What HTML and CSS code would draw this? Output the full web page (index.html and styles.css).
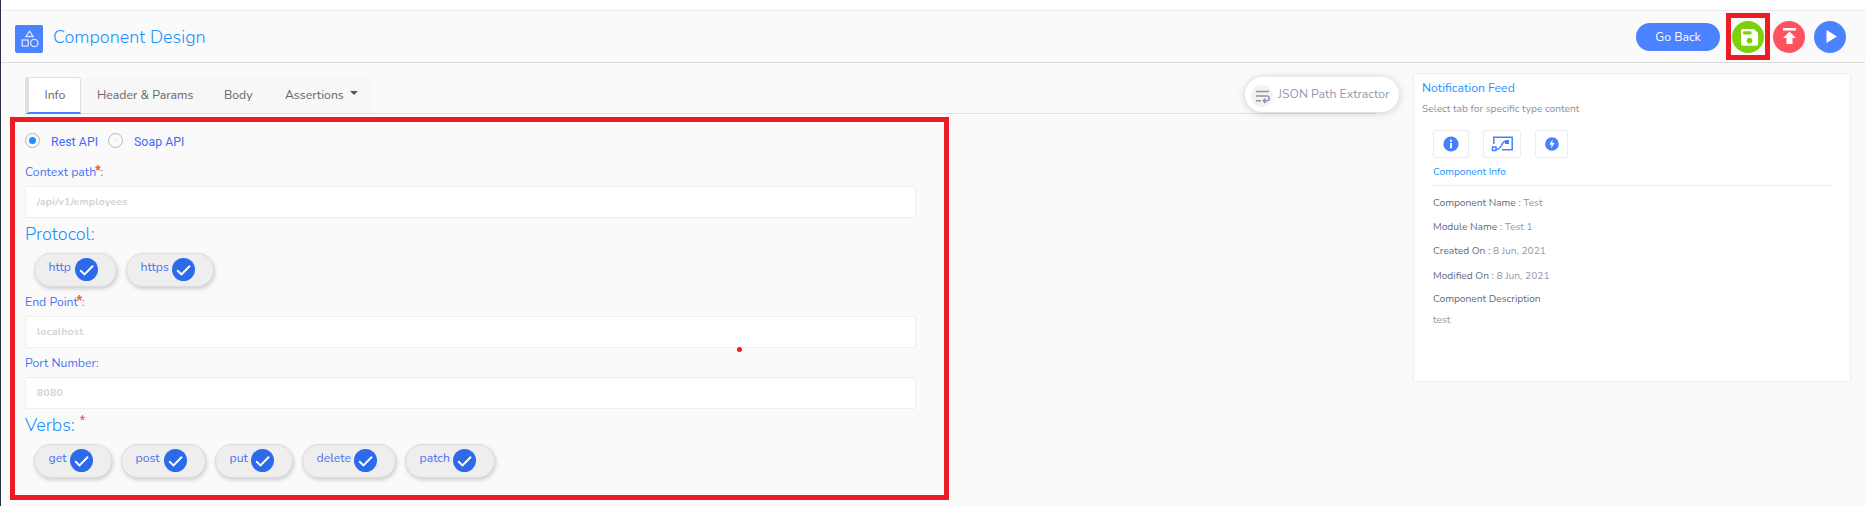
FILE: index.html
```html
<!DOCTYPE html>
<html lang="en">
<head>
<meta charset="utf-8">
<title>Component Design</title>
<link rel="stylesheet" href="styles.css">
</head>
<body>
<svg class="defs" width="0" height="0">
  <symbol id="check" viewBox="0 0 23 23"><circle cx="11.5" cy="11.5" r="11.5" fill="#2d6aea"/><path d="M5.2 12.2l4.3 4.2L18 7.8" fill="none" stroke="#fff" stroke-width="2"/></symbol>
</svg>
<div class="app">
  <div class="topbar"></div>
  <header class="header">
    <span class="logo"><svg width="20" height="20" viewBox="0 0 20 20" fill="none" stroke="#dbe6ff" stroke-width="1.3"><path d="M10.500 2.200l3.600 5.300H6.900z"/><rect x="3.200" y="11" width="6" height="6"/><circle cx="15.300" cy="14" r="3.700"/></svg></span>
    <h1 class="title">Component Design</h1>
    <div class="actions">
      <button class="go-back"><span>Go Back</span></button>
      <button class="round save"><svg width="32" height="32" viewBox="0 0 32 32"><path fill="#fff" fill-rule="evenodd" d="M10.500 8H22l4 4v11a1.800 1.800 0 0 1-1.800 1.800H10.800A1.800 1.800 0 0 1 9 23V9.800A1.800 1.800 0 0 1 10.500 8zm1.500 2.300a1.700 1.700 0 0 0 0 3.200h6.500a1.700 1.700 0 0 0 0-3.200zm5.500 6.500a2.900 2.900 0 1 0 .01 0z"/></svg></button>
      <button class="round upload"><svg width="32" height="32" viewBox="0 0 32 32"><path fill="#fff" d="M10 7h13v2.500H10zM16.500 10.500l6.500 6.500h-3.500v6h-6v-6H10z"/></svg></button>
      <button class="round run"><svg width="32" height="32" viewBox="0 0 32 32"><path fill="#fff" d="M12.500 9v13l10.500-6.500z"/></svg></button>
      <span class="mark-save"></span>
    </div>
  </header>
  <div class="content">
    <main class="main">
      <nav class="tabs">
        <a class="tab active">Info</a>
        <a class="tab params">Header &amp; Params</a>
        <a class="tab body-tab">Body</a>
        <a class="tab assertions">Assertions<i class="caret"></i></a>
      </nav>
      <button class="extractor"><i class="ex-icon"><svg width="22" height="22" viewBox="0 0 22 22" fill="none" stroke="#8d94ab" stroke-width="1.500"><path d="M5 6.500h13M5 11h11a2.300 2.300 0 0 1 0 4.700h-3.500M5 15.700h5M14.500 13.500l-2.200 2.200 2.200 2.200"/></svg></i><span>JSON Path Extractor</span></button>
      <form class="form">
        <div class="radios">
          <i class="radio on"></i><span class="r-label rest">Rest API</span>
          <i class="radio"></i><span class="r-label soap">Soap API</span>
        </div>
        <label class="label">Context path<sup>*</sup>:</label>
        <div class="input">/api/v1/employees</div>
        <h2 class="section">Protocol:</h2>
        <div class="pills first">
          <span class="pill w83"><b>http</b><svg width="23" height="23"><use href="#check"/></svg></span>
          <span class="pill w88"><b>https</b><svg width="23" height="23"><use href="#check"/></svg></span>
        </div>
        <label class="label endpoint">End Point<sup>*</sup>:</label>
        <div class="input">localhost</div>
        <label class="label port">Port Number:</label>
        <div class="input">8080</div>
        <h2 class="section verbs">Verbs:<sup>*</sup></h2>
        <div class="pills">
          <span class="pill w78"><b>get</b><svg width="23" height="23"><use href="#check"/></svg></span>
          <span class="pill w85"><b>post</b><svg width="23" height="23"><use href="#check"/></svg></span>
          <span class="pill w78"><b>put</b><svg width="23" height="23"><use href="#check"/></svg></span>
          <span class="pill w94"><b>delete</b><svg width="23" height="23"><use href="#check"/></svg></span>
          <span class="pill w90"><b>patch</b><svg width="23" height="23"><use href="#check"/></svg></span>
        </div>
      </form>
    </main>
    <aside class="feed">
      <h3 class="feed-title">Notification Feed</h3>
      <p class="feed-sub">Select tab for specific type content</p>
      <div class="feed-tabs">
        <span class="ft ft1"><svg width="16" height="16" viewBox="0 0 16 16"><circle cx="8" cy="8" r="7.600" fill="#4680ff"/><path d="M7 3.800h2v2H7zM7 7h2v5.200H7z" fill="#fff"/></svg></span>
        <span class="ft ft2"><svg width="22" height="16" viewBox="0 0 22 16" fill="none" stroke="#4680ff" stroke-width="1.500"><path d="M2.800 8V1.300h18.400v12.500H11M5 13h2c3 0 4-7.500 7-7.500"/><path d="M1.500 11h3.500v3.500H1.500z"/><path d="M14 4h4v4h-4z" fill="#4680ff" stroke="none"/></svg></span>
        <span class="ft ft3"><svg width="14" height="14" viewBox="0 0 14 14"><circle cx="7" cy="7" r="6.800" fill="#4680ff"/><path d="M7.500 2.500L4.300 7.700h2.200L6 11.500l3.600-5.400H7.400z" fill="#fff"/></svg></span>
      </div>
      <div class="feed-info">Component Info</div>
      <div class="facts">
        <div>Component Name : <em>Test</em></div>
        <div>Module Name : <em>Test 1</em></div>
        <div class="f3">Created On : <em>8 Jun, 2021</em></div>
        <div class="f4">Modified On : <em>8 Jun, 2021</em></div>
        <div class="f5">Component Description</div>
        <div><em>test</em></div>
      </div>
    </aside>
  </div>
  <span class="mark-form"></span>
  <span class="mark-dot"></span>
</div>
</body>
</html>
```
FILE: styles.css
```css
* { box-sizing: border-box; margin: 0; padding: 0; }
body { background: #fafafa; font-family: Nunito, Lato, sans-serif; font-size: 12.25px; color: #666; overflow: hidden; }
button { border: 0; font: inherit; }
h1, h2, h3, b { font-weight: 400; }
em, i { font-style: normal; }
svg { display: block; flex: none; }
span, a, b, label, h1, h2, h3 { white-space: nowrap; }
.defs { position: absolute; }
.app { position: relative; height: 506px; border-left: 1px solid #2b3445; }
.topbar { height: 11px; background: #fff; border-bottom: 1px solid #ececec; }
.header { display: flex; align-items: flex-start; height: 52px; padding: 10px 19px 0 14px; border-bottom: 1px solid #dcdcdc; }
.logo { display: flex; align-items: center; justify-content: center; width: 28px; height: 28px; margin-top: 4px; background: #4a82ff; border-radius: 2px; }
.title { margin-left: 10px; margin-top: 4px; font-size: 18px; font-weight: 300; line-height: 24px; color: #1e90ff; }
.actions { position: relative; display: flex; align-items: center; margin-left: auto; height: 32px; }
.go-back { width: 84px; height: 28px; margin-right: 12px; border-radius: 14px; background: #4a82ff; color: #fff; }
.round { width: 32px; height: 32px; margin-right: 9px; border-radius: 50%; }
.save { background: #7ed10a; }
.upload { background: #ff5260; }
.run { background: #4a82ff; margin-right: 0; }
.mark-save { position: absolute; left: 90px; top: -8px; width: 44px; height: 47px; border: 5px solid #ed1c24; }
.content { display: flex; padding: 10px 14px 0 24px; }
.main { position: relative; width: 1388px; padding-top: 4px; }
.tabs { display: flex; width: 1351px; height: 37px; border-bottom: 1px solid #dee0e2; }
.tab { display: flex; align-items: center; height: 36px; padding-bottom: 1px; background: #f7f7f7; color: #666; border-radius: 3px 3px 0 0; }
.active { width: 56px; height: 37px; padding-left: 15.5px; background: #fff; border: 1px solid #dee2e6; border-left-width: 4px; border-bottom: 2px solid #4680ff; padding-bottom: 0; }
.params { width: 128px; padding-left: 16px; }
.body-tab { width: 60px; padding-left: 15px; }
.assertions { width: 103px; padding-left: 16px; }
.caret { margin-left: 6px; margin-top: -3px; border: 4px solid transparent; border-top-color: #555; border-bottom: 0; }
.extractor { position: absolute; left: 1220px; top: 4px; display: flex; align-items: center; width: 154px; height: 35px; padding-left: 6px; border-radius: 18px; background: #fff; box-shadow: 0 1px 8px rgba(0,0,0,.18); color: #9499ae; }
.extractor span { margin-top: -1px; }
.ex-icon { width: 22px; height: 22px; margin: 2px 5px 0 0; border-radius: 50%; background: #f6f1f1; }
.radios { display: flex; align-items: center; height: 16px; margin-top: 18px; font-family: Roboto, sans-serif; color: #4169ff; }
.radio { display: flex; align-items: center; justify-content: center; width: 15px; height: 15px; border: 1px solid #adb8c5; border-radius: 50%; }
.radio::after { content: ""; width: 1px; height: 1px; background: #8db6e0; border-radius: 50%; }
.radio.on::after { width: 7px; height: 7px; background: #1e90ff; }
.r-label { line-height: 16px; padding-top: 3px; letter-spacing: .08px; }
.rest { margin-left: 11px; width: 57px; }
.soap { margin-left: 11px; }
.label { display: block; height: 38px; line-height: 16px; padding-top: 16px; color: #4a70f5; }
.label sup { display: inline-block; width: 4px; font-family: "Liberation Sans", sans-serif; font-size: 14px; font-weight: 700; line-height: 0; color: #ff6000; vertical-align: 1px; text-indent: -1px; }
.label.port { height: 29px; padding-top: 7px; }
.input { display: flex; align-items: center; width: 891px; height: 32px; padding: 0 0 1px 11px; background: #fff; border: 1px solid #eee; border-radius: 2px; font-size: 10.2px; font-weight: 700; color: #d2d2d2; letter-spacing: .35px; }
.section { height: 35px; padding-top: 4px; font-size: 18px; font-weight: 300; line-height: 24px; color: #1e90ff; }
.verbs sup { margin-left: 5px; font-family: "Liberation Sans", sans-serif; font-size: 14px; font-weight: 400; line-height: 0; color: #e2483d; vertical-align: 6px; }
.pills { display: flex; gap: 9px; padding-left: 9px; height: 34px; }
.pills.first { height: 25px; }
.pill { display: flex; align-items: flex-start; height: 34px; padding: 5px 0 0 13.5px; border: 1px solid #dcdcdc; border-radius: 17px; background: #eee; box-shadow: 1px 2px 4px rgba(0,0,0,.18); color: #4a70f5; }
.pill svg { margin: -1px 18px 0 auto; }
.pill b { line-height: 16px; }
.w78 { width: 78px; } .w83 { width: 83px; } .w85 { width: 85px; } .w88 { width: 88px; } .w90 { width: 90px; } .w94 { width: 94px; }
.feed { width: 438px; height: 309px; padding: 6px 8px; background: #fff; border: 1px solid #eee; border-radius: 3px; font-size: 10.2px; }
.feed-title { font-size: 12.25px; line-height: 16px; color: #1e90ff; }
.feed-sub { margin-top: 6px; line-height: 14px; color: #8f909a; }
.feed-tabs { display: flex; height: 28px; margin: 14px 0 0 11px; }
.ft { display: flex; align-items: center; justify-content: center; height: 28px; border: 1px solid #ececec; border-radius: 2px; }
.ft1 { width: 36px; margin-right: 14px; } .ft2 { width: 38px; margin-right: 14px; } .ft3 { width: 33px; }
.feed-info { margin: 0 11px; height: 28px; padding-top: 7px; line-height: 14px; color: #1e90ff; border-bottom: 1px solid #ececec; }
.facts { margin: 9px 11px 0; color: #646a84; }
.facts div { height: 24px; line-height: 14px; padding-top: 1px; }
.facts em { color: #9498a8; }
.facts .f3 { height: 25px; }
.facts .f4 { height: 23px; }
.facts .f5 { height: 21px; }
.mark-form { position: absolute; left: 9px; top: 117px; width: 939px; height: 383px; border: 5px solid #ed1c24; pointer-events: none; }
.mark-dot { position: absolute; left: 736px; top: 347px; width: 5px; height: 5px; border-radius: 50%; background: #ed1c24; }
```
